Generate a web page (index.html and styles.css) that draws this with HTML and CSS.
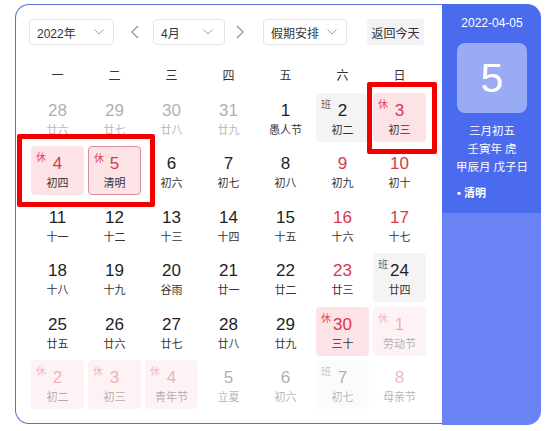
FILE: index.html
```html
<!DOCTYPE html>
<html lang="zh-CN">
<head>
<meta charset="utf-8">
<title>日历</title>
<link rel="stylesheet" href="styles.css">
</head>
<body>
<div class="page">
  <div class="calendar">
    <div class="main">
      <div class="toolbar">
        <div class="select year"><span>2022年</span><svg class="chev" width="10" height="6" viewBox="0 0 10 6"><path d="M0.5 0.5 L5 5 L9.5 0.5" fill="none" stroke="#a0a0a0" stroke-width="1"/></svg></div>
        <button class="arrow prev"><svg width="8" height="14" viewBox="0 0 8 14"><path d="M7 1 L1 7 L7 13" fill="none" stroke="#9a9a9a" stroke-width="1.4"/></svg></button>
        <div class="select month"><span>4月</span><svg class="chev" width="10" height="6" viewBox="0 0 10 6"><path d="M0.5 0.5 L5 5 L9.5 0.5" fill="none" stroke="#a0a0a0" stroke-width="1"/></svg></div>
        <button class="arrow next"><svg width="8" height="14" viewBox="0 0 8 14"><path d="M1 1 L7 7 L1 13" fill="none" stroke="#9a9a9a" stroke-width="1.4"/></svg></button>
        <div class="select holiday"><span>假期安排</span><svg class="chev" width="10" height="6" viewBox="0 0 10 6"><path d="M0.5 0.5 L5 5 L9.5 0.5" fill="none" stroke="#a0a0a0" stroke-width="1"/></svg></div>
        <button class="today-btn">返回今天</button>
      </div>
      <div class="weekdays">
        <div>一</div><div>二</div><div>三</div><div>四</div><div>五</div><div>六</div><div>日</div>
      </div>
      <div class="days">
        <div class="day other"><div class="num">28</div><div class="lunar">廿六</div></div>
        <div class="day other"><div class="num">29</div><div class="lunar">廿七</div></div>
        <div class="day other"><div class="num">30</div><div class="lunar">廿八</div></div>
        <div class="day other"><div class="num">31</div><div class="lunar">廿九</div></div>
        <div class="day"><div class="num">1</div><div class="lunar">愚人节</div></div>
        <div class="day work"><span class="tag">班</span><div class="num">2</div><div class="lunar">初二</div></div>
        <div class="day rest"><span class="tag">休</span><div class="num">3</div><div class="lunar">初三</div></div>

        <div class="day rest"><span class="tag">休</span><div class="num">4</div><div class="lunar">初四</div></div>
        <div class="day rest selected"><span class="tag">休</span><div class="num">5</div><div class="lunar">清明</div></div>
        <div class="day"><div class="num">6</div><div class="lunar">初六</div></div>
        <div class="day"><div class="num">7</div><div class="lunar">初七</div></div>
        <div class="day"><div class="num">8</div><div class="lunar">初八</div></div>
        <div class="day weekend"><div class="num">9</div><div class="lunar">初九</div></div>
        <div class="day weekend"><div class="num">10</div><div class="lunar">初十</div></div>

        <div class="day"><div class="num">11</div><div class="lunar">十一</div></div>
        <div class="day"><div class="num">12</div><div class="lunar">十二</div></div>
        <div class="day"><div class="num">13</div><div class="lunar">十三</div></div>
        <div class="day"><div class="num">14</div><div class="lunar">十四</div></div>
        <div class="day"><div class="num">15</div><div class="lunar">十五</div></div>
        <div class="day weekend"><div class="num">16</div><div class="lunar">十六</div></div>
        <div class="day weekend"><div class="num">17</div><div class="lunar">十七</div></div>

        <div class="day"><div class="num">18</div><div class="lunar">十八</div></div>
        <div class="day"><div class="num">19</div><div class="lunar">十九</div></div>
        <div class="day"><div class="num">20</div><div class="lunar">谷雨</div></div>
        <div class="day"><div class="num">21</div><div class="lunar">廿一</div></div>
        <div class="day"><div class="num">22</div><div class="lunar">廿二</div></div>
        <div class="day weekend"><div class="num">23</div><div class="lunar">廿三</div></div>
        <div class="day work"><span class="tag">班</span><div class="num">24</div><div class="lunar">廿四</div></div>

        <div class="day"><div class="num">25</div><div class="lunar">廿五</div></div>
        <div class="day"><div class="num">26</div><div class="lunar">廿六</div></div>
        <div class="day"><div class="num">27</div><div class="lunar">廿七</div></div>
        <div class="day"><div class="num">28</div><div class="lunar">廿八</div></div>
        <div class="day"><div class="num">29</div><div class="lunar">廿九</div></div>
        <div class="day rest"><span class="tag">休</span><div class="num">30</div><div class="lunar">三十</div></div>
        <div class="day rest other"><span class="tag">休</span><div class="num">1</div><div class="lunar">劳动节</div></div>

        <div class="day rest other"><span class="tag">休</span><div class="num">2</div><div class="lunar">初二</div></div>
        <div class="day rest other"><span class="tag">休</span><div class="num">3</div><div class="lunar">初三</div></div>
        <div class="day rest other"><span class="tag">休</span><div class="num">4</div><div class="lunar">青年节</div></div>
        <div class="day other"><div class="num">5</div><div class="lunar">立夏</div></div>
        <div class="day other"><div class="num">6</div><div class="lunar">初六</div></div>
        <div class="day work other"><span class="tag">班</span><div class="num">7</div><div class="lunar">初七</div></div>
        <div class="day weekend other"><div class="num">8</div><div class="lunar">母亲节</div></div>
      </div>
    </div>
    <div class="panel">
      <div class="panel-top">
        <div class="p-date">2022-04-05</div>
        <div class="big-day">5</div>
        <div class="p-line first">三月初五</div>
        <div class="p-line">壬寅年 虎</div>
        <div class="p-line">甲辰月 戊子日</div>
        <div class="p-fest">• 清明</div>
      </div>
      <div class="panel-bottom"></div>
    </div>
  </div>
  <div class="mark mark-a"></div>
  <div class="mark mark-b"></div>
</div>
</body>
</html>
```
FILE: styles.css
```css
* { box-sizing: border-box; }
html, body { margin: 0; padding: 0; background: #ffffff; }
body {
  font-family: "Liberation Sans", "Noto Sans CJK SC", sans-serif;
  color: #222;
}
.page {
  position: relative;
  width: 550px;
  height: 431px;
  padding: 4px 0 0 15px;
}
.calendar {
  display: flex;
  width: 526px;
  height: 420px;
}
.main {
  width: 427px;
  height: 420px;
  border: 1px solid #5a6dd2;
  border-right: none;
  border-radius: 14px 0 0 14px;
  padding: 14px 0 14px 13px;
}
.toolbar {
  display: flex;
  align-items: center;
  height: 26px;
}
.select {
  height: 26px;
  border: 1px solid #e3e3e3;
  border-radius: 4px;
  display: flex;
  align-items: center;
  justify-content: space-between;
  padding: 0 9px 0 7px;
  font-size: 12px;
  color: #333;
}
.select.year { width: 85px; }
.select.month { width: 72px; padding-right: 11px; }
.select.holiday { width: 84px; }
.arrow {
  border: none;
  background: none;
  padding: 0;
  width: 24px;
  height: 26px;
  display: flex;
  align-items: center;
  justify-content: center;
}
.arrow.prev { margin: 0 6px 0 9px; }
.arrow.next { margin: 0 11px 0 3px; }
.today-btn {
  margin-left: 20px;
  width: 57px;
  height: 26px;
  border: none;
  border-radius: 3px;
  background: #f3f3f3;
  font-family: inherit;
  font-size: 12px;
  color: #333;
  padding: 0;
}
.weekdays {
  margin-top: 15px;
  margin-left: 2px;
  display: grid;
  grid-template-columns: repeat(7, 53px);
  column-gap: 4px;
  height: 28px;
  align-items: center;
  text-align: center;
  font-size: 12px;
  color: #333;
}
.days {
  margin-top: 5px;
  margin-left: 2px;
  display: grid;
  grid-template-columns: repeat(7, 53px);
  grid-auto-rows: 49px;
  column-gap: 4px;
  row-gap: 4.4px;
}
.day {
  position: relative;
  border-radius: 4px;
  text-align: center;
  padding-top: 8px;
}
.num {
  font-size: 17px;
  line-height: 20px;
  color: #1e1e1e;
}
.lunar {
  margin-top: 2px;
  font-size: 11px;
  line-height: 14px;
  color: #333;
}
.tag {
  position: absolute;
  left: 5px;
  top: 6px;
  font-size: 10px;
  line-height: 12px;
}
.rest { background: #fde3e5; }
.rest .num, .weekend .num { color: #d5394b; }
.rest .tag { color: #df4b5b; }
.work { background: #f4f4f4; }
.work .tag { color: #666; }
.selected { border: 1px solid #d88e9b; padding-top: 7px; }
.other { opacity: 0.36; }
.other.rest { opacity: 0.4; }

.panel {
  width: 99px;
  height: 421px;
  border-radius: 0 14px 14px 0;
  overflow: hidden;
  display: flex;
  flex-direction: column;
  color: #fff;
}
.panel-top {
  background: #4b6bef;
  padding: 11px 14px 12px 15px;
  display: flex;
  flex-direction: column;
}
.p-date {
  text-align: center;
  font-size: 12px;
  line-height: 16px;
}
.big-day {
  margin-top: 12px;
  width: 70px;
  height: 70px;
  border-radius: 8px;
  background: #9aabf6;
  font-size: 41px;
  line-height: 70px;
  text-align: center;
  color: #fff;
}
.p-line {
  text-align: center;
  font-size: 11.5px;
  line-height: 18px;
  white-space: nowrap;
  margin: 0 -8px;
}
.p-line.first { margin-top: 9px; }
.p-fest {
  margin-top: 9px;
  font-size: 11px;
  line-height: 16px;
  font-weight: bold;
}
.panel-bottom {
  flex: 1;
  background: #6a82f4;
}
.mark {
  position: absolute;
  border: 5px solid #f20000;
  border-radius: 2px;
}
.mark-a { left: 367px; top: 82px; width: 70px; height: 72px; }
.mark-b { left: 17px; top: 134px; width: 138px; height: 73px; }
```
